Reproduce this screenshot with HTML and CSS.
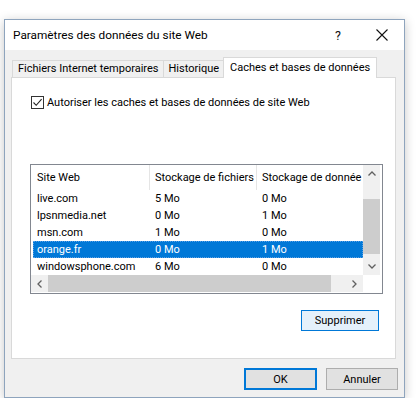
FILE: index.html
```html
<!DOCTYPE html>
<html lang="fr">
<head>
<meta charset="utf-8">
<title>Paramètres des données du site Web</title>
<link rel="stylesheet" href="styles.css">
</head>
<body>
<div class="dialog">
  <div class="titlebar">
    <span class="title">Paramètres des données du site Web</span>
    <span class="help">?</span>
    <span class="close"><svg width="12" height="12" viewBox="0 0 12 12"><path d="M0.5 0.5L11.5 11.5M11.5 0.5L0.5 11.5" stroke="#111" stroke-width="1.1" fill="none"/></svg></span>
  </div>
  <div class="content">
    <div class="tabs">
      <div class="tab">Fichiers Internet temporaires</div>
      <div class="tab">Historique</div>
      <div class="tab active">Caches et bases de données</div>
    </div>
    <div class="panel">
      <label class="check">
        <span class="box"><svg width="11" height="11" viewBox="0 0 11 11"><path d="M1.5 5.5L4.2 8.3L9.6 2.2" stroke="#222" stroke-width="1.1" fill="none"/></svg></span>
        <span>Autoriser les caches et bases de données de site Web</span>
      </label>
      <div class="listbox">
        <div class="listmain">
          <div class="listarea">
            <div class="row header">
              <div class="c1">Site Web</div>
              <div class="c2">Stockage de fichiers</div>
              <div class="c3">Stockage de donnée</div>
            </div>
            <div class="row"><div class="c1">live.com</div><div class="c2">5 Mo</div><div class="c3">0 Mo</div></div>
            <div class="row"><div class="c1">lpsnmedia.net</div><div class="c2">0 Mo</div><div class="c3">1 Mo</div></div>
            <div class="row"><div class="c1">msn.com</div><div class="c2">1 Mo</div><div class="c3">0 Mo</div></div>
            <div class="row selected"><div class="c1">orange.fr</div><div class="c2">0 Mo</div><div class="c3">1 Mo</div></div>
            <div class="row"><div class="c1">windowsphone.com</div><div class="c2">6 Mo</div><div class="c3">0 Mo</div></div>
          </div>
          <div class="vscroll">
            <div class="arrow"><svg width="8" height="5" viewBox="0 0 8 5"><path d="M0.5 4.5L4 1L7.5 4.5" stroke="#606060" stroke-width="1.3" fill="none"/></svg></div>
            <div class="vtrack"><div class="vthumb"></div></div>
            <div class="arrow"><svg width="8" height="5" viewBox="0 0 8 5"><path d="M0.5 0.5L4 4L7.5 0.5" stroke="#606060" stroke-width="1.3" fill="none"/></svg></div>
          </div>
        </div>
        <div class="hscroll">
          <div class="harrow"><svg width="5" height="8" viewBox="0 0 5 8"><path d="M4.5 0.5L1 4L4.5 7.5" stroke="#606060" stroke-width="1.3" fill="none"/></svg></div>
          <div class="hthumb"></div>
          <div class="htrack"></div>
          <div class="harrow"><svg width="5" height="8" viewBox="0 0 5 8"><path d="M0.5 0.5L4 4L0.5 7.5" stroke="#606060" stroke-width="1.3" fill="none"/></svg></div>
          <div class="corner"></div>
        </div>
      </div>
      <div class="actions">
        <button class="btn focus-light">Supprimer</button>
      </div>
    </div>
    <div class="footer">
      <button class="btn default">OK</button>
      <button class="btn">Annuler</button>
    </div>
  </div>
</div>
</body>
</html>
```

FILE: styles.css
```css
* { box-sizing: border-box; }
html, body { margin: 0; padding: 0; background: #ffffff; }
body {
  font-family: Roboto, "Noto Sans", "DejaVu Sans", sans-serif;
  font-size: 11px;
  color: #000;
}
.dialog {
  margin: 19px 0 0 4px;
  width: 401px;
  height: 379px;
  border: 1px solid #8ea4bd;
  background: #f0f0f0;
  box-shadow: 0 2px 10px rgba(0, 0, 0, 0.22);
  display: flex;
  flex-direction: column;
}
.titlebar {
  height: 30px;
  background: #ffffff;
  display: flex;
  align-items: center;
  padding-left: 8px;
}
.title {
  flex: 1;
  font-size: 11.8px;
  color: #000;
}
.help {
  font-size: 12.5px;
  width: 20px;
  margin-right: 28px;
  text-align: center;
  color: #111;
}
.close {
  width: 12px;
  height: 12px;
  margin-right: 16px;
  display: flex;
}
.content {
  flex: 1;
  padding: 7px 0 0 6px;
  display: flex;
  flex-direction: column;
}
.tabs {
  display: flex;
  align-items: flex-end;
  height: 20px;
  padding-left: 1px;
  position: relative;
  z-index: 1;
}
.tab {
  height: 17px;
  border: 1px solid #d9d9d9;
  border-bottom: none;
  border-right: none;
  background: #f0f0f0;
  padding: 0 4px 0 5px;
  line-height: 16px;
  white-space: nowrap;
}
.tab.active {
  height: 21px;
  background: #ffffff;
  border-right: 1px solid #d9d9d9;
  padding: 2px 6px 0 6px;
  margin-bottom: -1px;
}
.panel {
  width: 385px;
  height: 282px;
  background: #ffffff;
  border: 1px solid #d9d9d9;
  display: flex;
  flex-direction: column;
  padding: 17px 0 0 18px;
}
.check {
  display: flex;
  align-items: center;
  gap: 3px;
  height: 14px;
  padding-left: 1px;
}
.box {
  width: 13px;
  height: 13px;
  border: 1px solid #333;
  display: flex;
  align-items: center;
  justify-content: center;
  background: #fff;
}
.listbox {
  margin-top: 55px;
  width: 353px;
  height: 130px;
  border: 1px solid #828790;
  display: flex;
  flex-direction: column;
}
.listmain {
  flex: 1;
  display: flex;
  min-height: 0;
}
.listarea {
  flex: 1;
  overflow: hidden;
  padding-left: 2px;
}
.row {
  display: flex;
  height: 17px;
  line-height: 17px;
  white-space: nowrap;
}
.row.header {
  height: 25px;
  line-height: 26px;
}
.c1 { width: 116px; padding-left: 4px; flex: none; }
.c2 { width: 107px; padding-left: 6px; flex: none; }
.c3 { width: 110px; padding-left: 6px; flex: none; overflow: hidden; }
.row.header .c2, .row.header .c3 { border-left: 1px solid #e5e5e5; padding-left: 5px; }
.row.selected {
  background: #0078d7;
  color: #ffffff;
  outline: 1px dotted #5aa0e6;
  outline-offset: -1px;
}
.vscroll {
  width: 17px;
  flex: none;
  display: flex;
  flex-direction: column;
  background: #f0f0f0;
  margin-right: 2px;
}
.arrow {
  height: 17px;
  display: flex;
  align-items: center;
  justify-content: center;
}
.vtrack {
  flex: 1;
  display: flex;
  flex-direction: column;
  justify-content: flex-end;
  padding-bottom: 4px;
}
.vthumb {
  height: 55px;
  background: #cdcdcd;
}
.hscroll {
  height: 17px;
  display: flex;
  background: #f0f0f0;
  margin-bottom: 1px;
}
.harrow {
  width: 17px;
  flex: none;
  display: flex;
  align-items: center;
  justify-content: center;
}
.hthumb {
  width: 283px;
  flex: none;
  background: #cdcdcd;
}
.htrack { flex: 1; }
.corner {
  width: 19px;
  flex: none;
  background: #ffffff;
}
.actions {
  display: flex;
  justify-content: flex-end;
  padding-right: 16px;
  margin-top: 16px;
}
.btn {
  font-family: Roboto, "Noto Sans", "DejaVu Sans", sans-serif;
  font-size: 11px;
  width: 72px;
  height: 22px;
  padding: 0;
  background: #e1e1e1;
  border: 1px solid #adadad;
  color: #000;
}
.btn.focus-light {
  width: 78px;
  height: 21px;
  background: #e5f1fb;
  border: 1px solid #0078d7;
}
.btn.default {
  width: 73px;
  border: 2px solid #0078d7;
}
.footer {
  display: flex;
  justify-content: flex-end;
  gap: 9px;
  padding-right: 6px;
  margin-top: 9px;
}
```
